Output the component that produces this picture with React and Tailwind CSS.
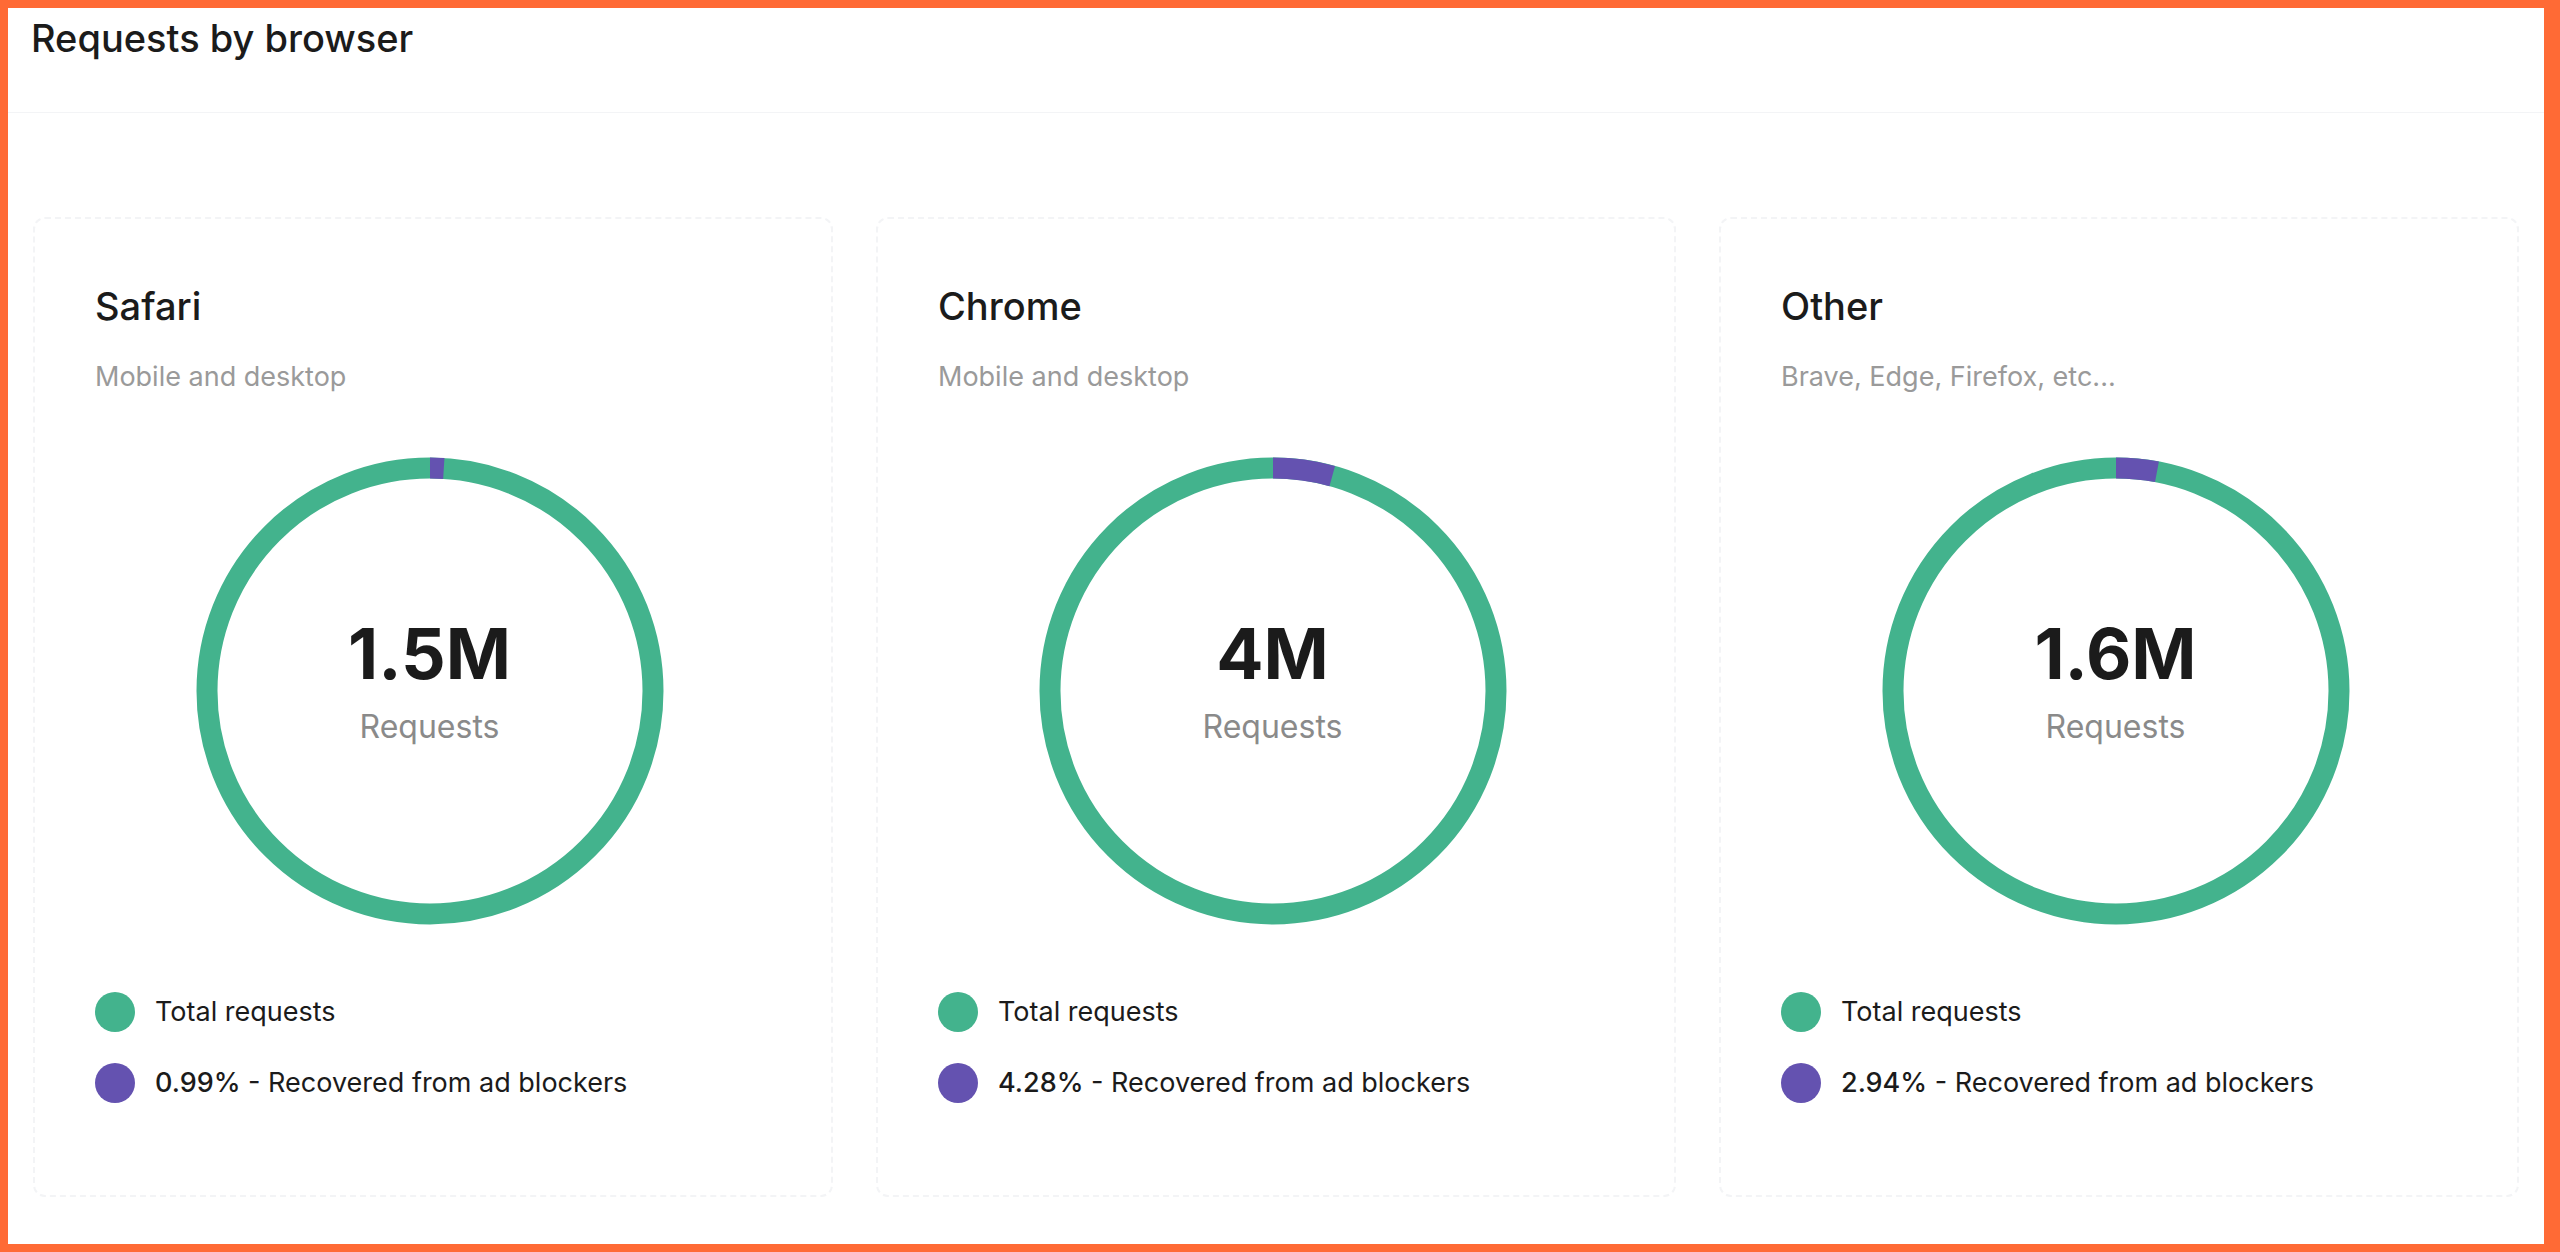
const browsers = [
  { name: "Safari", sub: "Mobile and desktop", total: "1.5M", pct: 0.99 },
  { name: "Chrome", sub: "Mobile and desktop", total: "4M", pct: 4.28 },
  { name: "Other", sub: "Brave, Edge, Firefox, etc...", total: "1.6M", pct: 2.94 },
];

const Donut = ({ pct }) => {
  const r = 223;
  const c = 2 * Math.PI * r;
  const seg = (c * pct) / 100;
  return (
    <svg width="470" height="470" viewBox="0 0 470 470" className="absolute inset-0">
      <circle cx="235" cy="235" r={r} fill="none" stroke="#43b38d" strokeWidth="21" />
      <circle
        cx="235"
        cy="235"
        r={r}
        fill="none"
        stroke="#6452b0"
        strokeWidth="21"
        strokeDasharray={`${seg} ${c}`}
        transform="rotate(-90 235 235)"
      />
    </svg>
  );
};

const Card = ({ b }) => (
  <div className="flex-1 rounded-xl border-2 border-dashed border-gray-100 px-[60px] pt-[68px] h-[980px]">
    <h3 className="text-[38px] leading-none font-medium text-[#1b1b1b]">{b.name}</h3>
    <p className="mt-[38px] text-[27px] leading-none text-[#9a9a9a]">{b.sub}</p>
    <div className="flex justify-center mt-[66px] ml-[-7px]">
      <div className="relative w-[470px] h-[470px] flex flex-col items-center justify-center">
        <Donut pct={b.pct} />
        <div className="text-[70px] leading-none font-bold text-[#1b1b1b] mt-[-20px]">{b.total}</div>
        <div className="text-[32px] leading-none text-[#8a8a8a] mt-[22px]">Requests</div>
      </div>
    </div>
    <div className="mt-[66px] flex flex-col gap-[30px] text-[27px] text-[#1b1b1b]">
      <div className="flex items-center gap-[20px]">
        <span className="w-10 h-10 rounded-full bg-[#43b38d]" />
        <span>Total requests</span>
      </div>
      <div className="flex items-center gap-[20px]">
        <span className="w-10 h-10 rounded-full bg-[#6452b0]" />
        <span>
          <span className="font-medium">{b.pct.toFixed(2)}%</span> - Recovered from ad blockers
        </span>
      </div>
    </div>
  </div>
);

export default function App() {
  return (
    <div
      className="w-[2560px] h-[1252px] border-[8px] border-r-[16px] border-[#ff6a35] bg-white"
      style={{ fontFamily: "Inter, 'Noto Sans', sans-serif" }}
    >
      <div className="h-[105px] border-b border-gray-100 px-[23px] pt-[2px]">
        <h2 className="text-[38px] font-medium text-[#1b1b1b]">Requests by browser</h2>
      </div>
      <div className="flex gap-[43px] px-[25px] pt-[104px]">
        {browsers.map((b) => (
          <Card key={b.name} b={b} />
        ))}
      </div>
    </div>
  );
}
